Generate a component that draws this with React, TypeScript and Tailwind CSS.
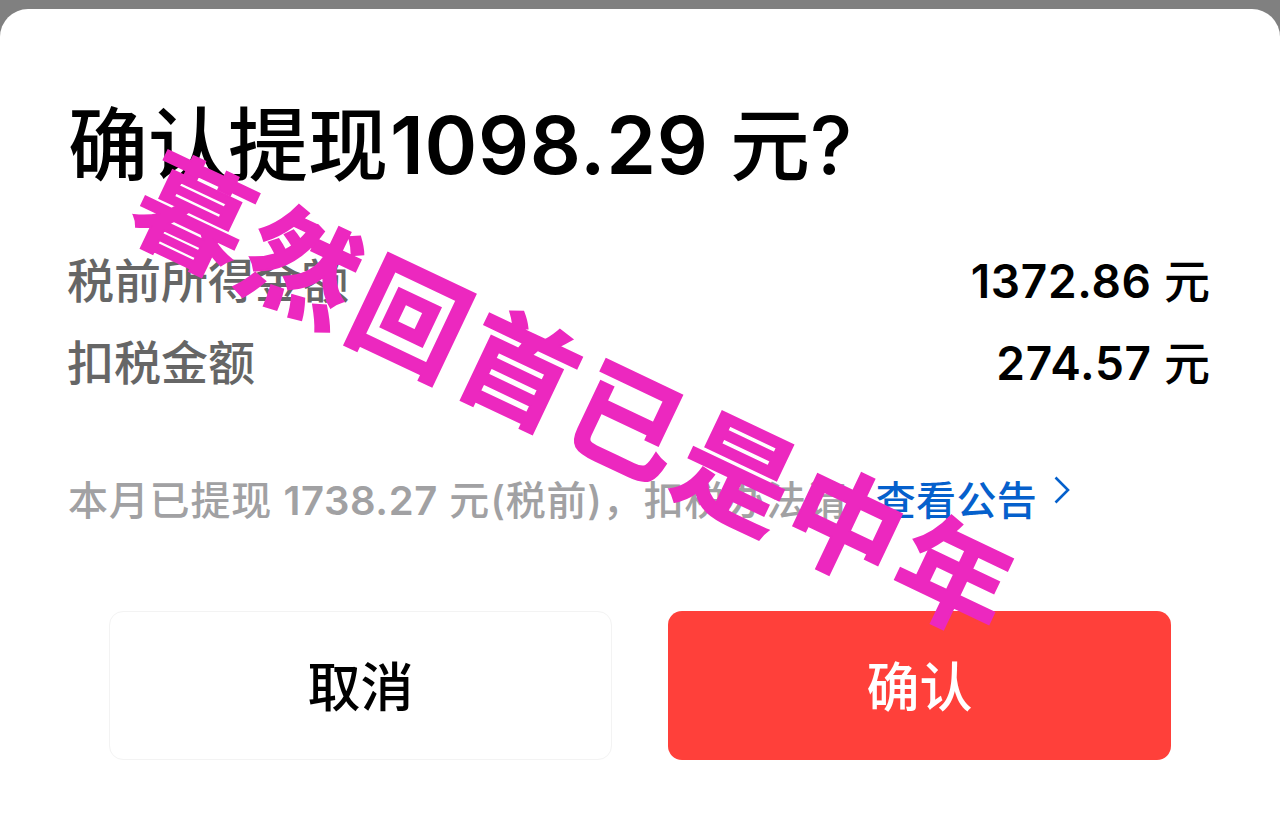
interface AmountRowProps {
  label: string;
  amount: string;
}

function AmountRow({ label, amount }: AmountRowProps) {
  return (
    <div className="flex h-[82px] items-center justify-between font-medium">
      <span className="-mt-px -ml-[2px] text-[47px] text-[#666]">{label}</span>
      <span className="-mt-[2px] mr-px text-[46px] text-black">
        <span className="font-semibold tracking-[0.7px]">{amount}</span> 元
      </span>
    </div>
  );
}

export default function App() {
  return (
    <div className="h-[815px] w-[1280px] overflow-hidden bg-[#808080] pt-[9px] font-['Inter','Noto_Sans_CJK_SC',sans-serif] whitespace-nowrap">
      <div className="relative h-[806px] rounded-t-[28px] bg-white px-[69px] pt-[84px]">
        <h1 className="-ml-px flex h-[104px] items-center text-[80px] leading-none font-medium text-black">
          <span>
            确认提现<span className="ml-[2px] font-semibold tracking-[0.7px]">1098.29</span> 元?
          </span>
        </h1>

        <div className="mt-[44px]">
          <AmountRow label="税前所得金额" amount="1372.86" />
          <AmountRow label="扣税金额" amount="274.57" />
        </div>

        <div className="mt-[56px] flex h-[80px] items-center text-[40px] font-medium text-[#a1a1a3]">
          <p className="-ml-px tracking-[0.8px]">
            本月已提现 <span className="font-semibold tracking-[0.6px]">1738.27</span> 元(税前)，扣税办法请
          </p>
          <a className="ml-[28px] flex items-center tracking-[0.4px] text-[#0560cc]">
            查看公告
            <svg className="mb-[22px] ml-[17px] h-[28px] w-[16px]" viewBox="0 0 16 28" fill="none">
              <path d="M1.5 1.5L14 14L1.5 26.5" stroke="currentColor" strokeWidth="2.6" />
            </svg>
          </a>
        </div>

        <div className="mt-[70px] flex gap-[56px] px-[40px]">
          <button className="h-[149px] w-[503px] rounded-[14px] border border-[#f3f3f3] pt-[6px] text-[53px] font-medium text-black">
            取消
          </button>
          <button className="h-[149px] w-[503px] rounded-[14px] bg-[#ff403a] pt-[6px] text-[53px] font-medium text-white">
            确认
          </button>
        </div>

        <div className="absolute top-[390px] left-[576px] -translate-x-1/2 -translate-y-1/2 rotate-[25.4deg] text-[113px] leading-none font-bold tracking-[7.3px] text-[#ec28bf] [-webkit-text-stroke:1.8px_#ec28bf]">
          暮然回首已是中年
        </div>
      </div>
    </div>
  );
}
